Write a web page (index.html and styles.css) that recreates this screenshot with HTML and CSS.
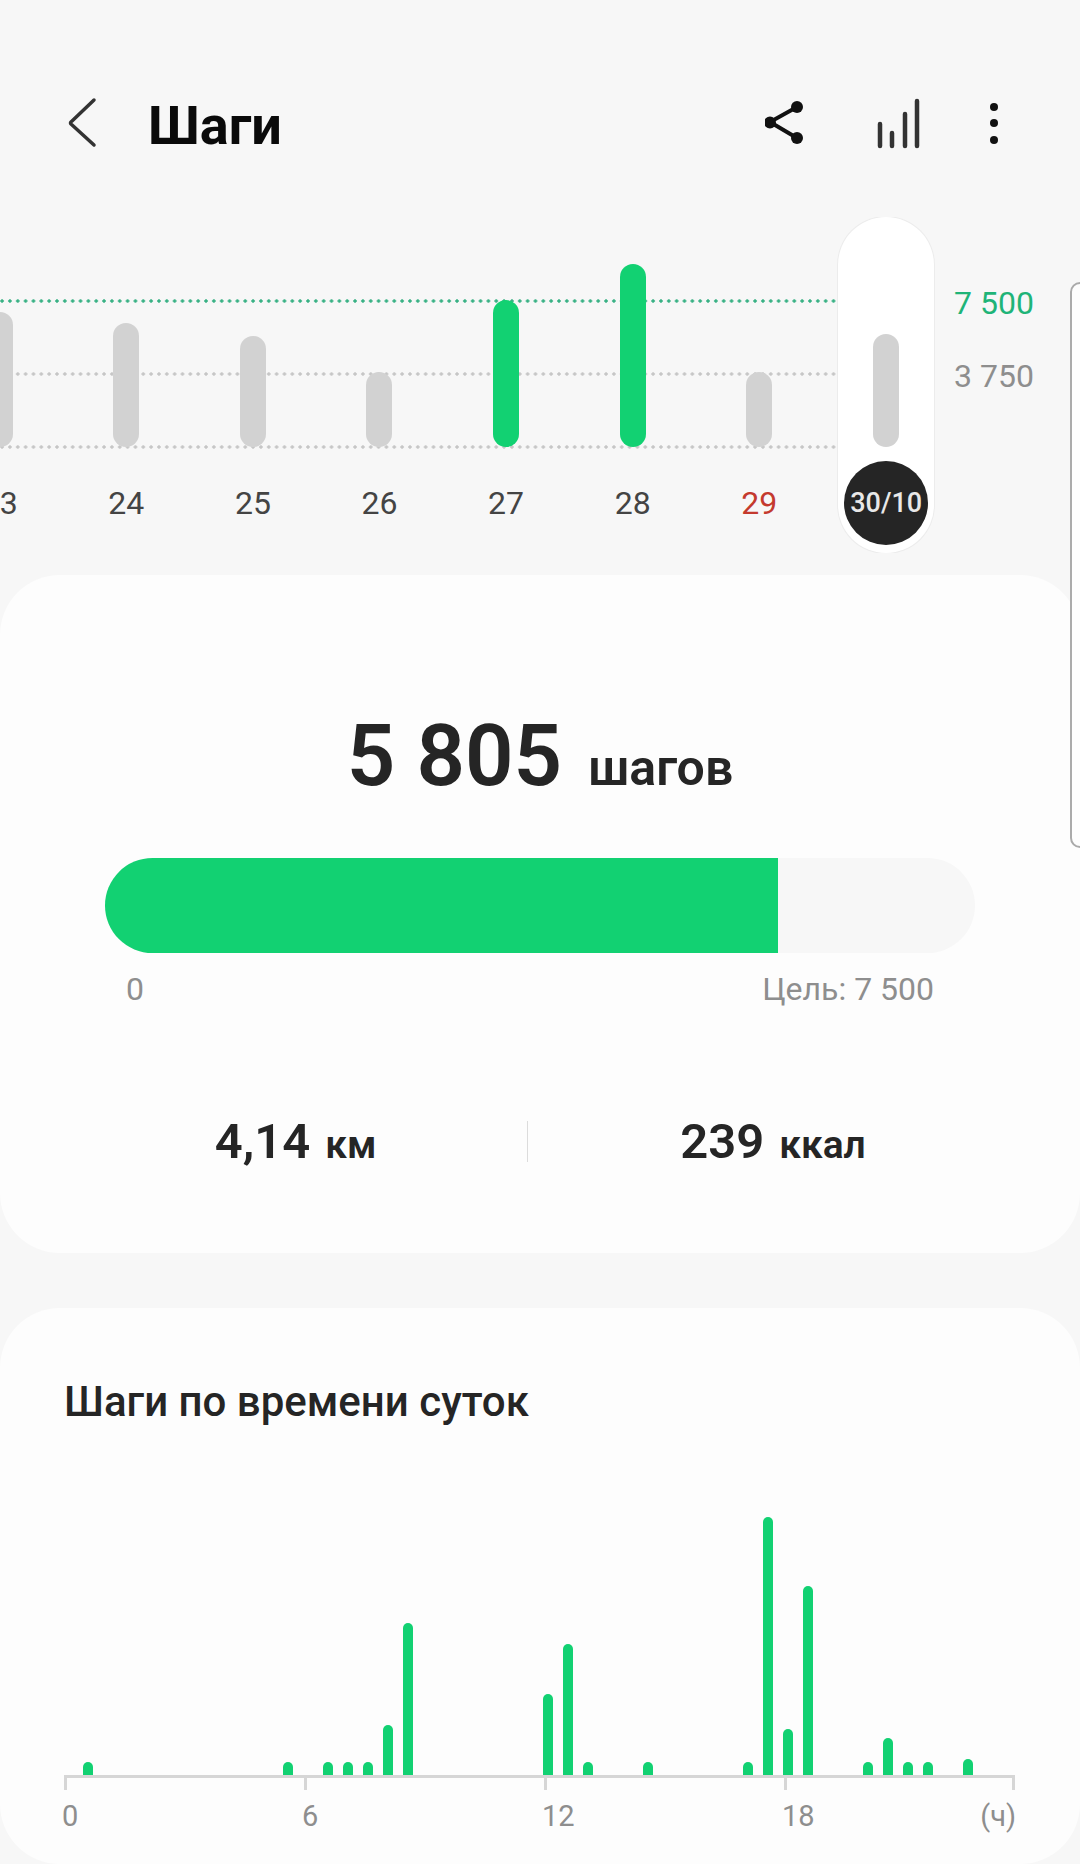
FILE: index.html
```html
<!DOCTYPE html>
<html lang="ru">
<head>
    <meta charset="UTF-8">
    <meta name="viewport" content="width=device-width, initial-scale=1.0">
    <title>Шаги</title>
    <link rel="stylesheet" href="styles.css">
</head>
<body>
    <header class="topbar">
        <svg class="back" width="40" height="60" viewBox="0 0 40 60">
            <path d="M34 7 L11 29 Q10 30 11 31 L34 52" />
        </svg>
        <h1>Шаги</h1>
        <svg class="icon-share" width="46" height="60" viewBox="0 0 46 60">
            <path d="M32 14 L5 29 L32 45" />
            <circle cx="32" cy="14" r="6" />
            <circle cx="5" cy="29.500" r="6" />
            <circle cx="32" cy="45" r="6" />
        </svg>
        <svg class="icon-signal" width="50" height="60" viewBox="0 0 50 60">
            <path d="M5 31 V53 M17 40 V53 M30 21 V53 M42 8 V53" />
        </svg>
        <svg class="icon-more" width="16" height="60" viewBox="0 0 16 60">
            <circle cx="8" cy="14" r="4" />
            <circle cx="8" cy="30" r="4" />
            <circle cx="8" cy="47" r="4" />
        </svg>
    </header>

    <section class="week">
        <div class="week-strip">
            <div class="grid-lines"></div>
            <div class="day first"><div class="plot"><div class="bar" style="height:135px"></div></div><div class="day-label">23</div></div>
            <div class="day"><div class="plot"><div class="bar" style="height:124px"></div></div><div class="day-label">24</div></div>
            <div class="day"><div class="plot"><div class="bar" style="height:111px"></div></div><div class="day-label">25</div></div>
            <div class="day"><div class="plot"><div class="bar" style="height:75px"></div></div><div class="day-label">26</div></div>
            <div class="day"><div class="plot"><div class="bar green" style="height:147px"></div></div><div class="day-label">27</div></div>
            <div class="day"><div class="plot"><div class="bar green" style="height:183px"></div></div><div class="day-label">28</div></div>
            <div class="day"><div class="plot"><div class="bar" style="height:75px"></div></div><div class="day-label red">29</div></div>
            <div class="day selected"><div class="plot"><div class="bar" style="height:113px"></div></div><div class="day-label">30/10</div></div>
        </div>
        <div class="scale">
            <span class="goal">7 500</span>
            <span>3 750</span>
        </div>
    </section>

    <div class="peek"></div>

    <section class="card summary">
        <div class="count"><span class="count-num">5 805</span><span class="count-unit">шагов</span></div>
        <div class="progress"><div class="progress-fill" style="width:77.4%"></div></div>
        <div class="progress-labels"><span>0</span><span>Цель: 7 500</span></div>
        <div class="stats">
            <div class="stat"><b>4,14</b><span>км</span></div>
            <div class="stat stat-right"><b>239</b><span>ккал</span></div>
        </div>
    </section>

    <section class="card hours">
        <h2>Шаги по времени суток</h2>
        <div class="hour-bars">
            <i style="grid-column:2;height:13px"></i>
            <i style="grid-column:12;height:13px"></i>
            <i style="grid-column:14;height:13px"></i>
            <i style="grid-column:15;height:13px"></i>
            <i style="grid-column:16;height:13px"></i>
            <i style="grid-column:17;height:50px"></i>
            <i style="grid-column:18;height:152px"></i>
            <i style="grid-column:25;height:81px"></i>
            <i style="grid-column:26;height:131px"></i>
            <i style="grid-column:27;height:13px"></i>
            <i style="grid-column:30;height:13px"></i>
            <i style="grid-column:35;height:13px"></i>
            <i style="grid-column:36;height:258px"></i>
            <i style="grid-column:37;height:46px"></i>
            <i style="grid-column:38;height:189px"></i>
            <i style="grid-column:41;height:13px"></i>
            <i style="grid-column:42;height:37px"></i>
            <i style="grid-column:43;height:13px"></i>
            <i style="grid-column:44;height:13px"></i>
            <i style="grid-column:46;height:16px"></i>
        </div>
        <div class="axis">
            <div class="tick"><span>0</span></div>
            <div class="tick"><span>6</span></div>
            <div class="tick"><span>12</span></div>
            <div class="tick"><span>18</span></div>
            <div class="tick tick-end"><span>(ч)</span></div>
        </div>
    </section>
</body>
</html>
```

FILE: styles.css
```css
body {
    margin: 0;
    width: 1080px;
    height: 1864px;
    overflow: hidden;
    position: relative;
    background: #f7f7f7;
    font-family: 'Roboto', 'Liberation Sans', sans-serif;
    color: #252525;
}

/* top bar */
.topbar {
    display: flex;
    align-items: center;
    height: 60px;
    padding: 93px 0 64px 60px;
}
.topbar h1 {
    flex: 1;
    margin: 0 0 0 48px;
    font-size: 54px;
    line-height: 60px;
    font-weight: 700;
    color: #0a0a0a;
    position: relative;
    top: 3px;
}
.back path {
    fill: none;
    stroke: #333;
    stroke-width: 3.5;
    stroke-linecap: round;
    stroke-linejoin: round;
}
.icon-share {
    margin-right: 64px;
}
.icon-share path {
    fill: none;
    stroke: #111;
    stroke-width: 4;
}
.icon-share circle,
.icon-more circle {
    fill: #111;
}
.icon-signal {
    margin-right: 61px;
}
.icon-signal path {
    fill: none;
    stroke: #333;
    stroke-width: 4.5;
    stroke-linecap: round;
}
.icon-more {
    margin-right: 78px;
}

/* week chart */
.week {
    display: flex;
    height: 336px;
}
.week-strip {
    width: 949px;
    flex: none;
    display: flex;
    overflow: hidden;
    position: relative;
}
.grid-lines {
    position: absolute;
    left: 0;
    top: 0;
    width: 838px;
    height: 240px;
    background:
        radial-gradient(circle, #38b184 1.4px, transparent 2px) 6px 82px / 7.85px 4px repeat-x,
        radial-gradient(circle, #c6c6c6 1.4px, transparent 2px) 6px 155px / 7.85px 4px repeat-x,
        radial-gradient(circle, #c6c6c6 1.4px, transparent 2px) 6px 228px / 7.85px 4px repeat-x;
}
.day {
    flex: none;
    width: 126.600px;
    position: relative;
}
.day.first {
    margin-left: -63.600px;
}
.plot {
    height: 230px;
    display: flex;
    align-items: flex-end;
    justify-content: center;
}
.bar {
    width: 26px;
    border-radius: 13px;
    background: #d2d2d2;
}
.bar.green {
    background: #12d172;
}
.day-label {
    margin-top: 14px;
    height: 84px;
    line-height: 84px;
    text-align: center;
    font-size: 32px;
    color: #444;
}
.day-label.red {
    color: #c43a2e;
}
.day.selected {
    width: 96px;
    height: 336px;
    margin-left: 15.600px;
    background: #fff;
    border-radius: 48px;
    box-shadow: 0 0 0 1px #ececec;
}
.day.selected .day-label {
    width: 84px;
    margin: 14px auto 0;
    border-radius: 50%;
    background: #252525;
    color: #e8e8e8;
    font-size: 27px;
    font-weight: 500;
}
.scale {
    display: flex;
    flex-direction: column;
    gap: 37px;
    padding: 68px 0 0 5px;
    font-size: 32px;
    line-height: 36px;
    color: #8e8e8e;
}
.scale .goal {
    color: #1fb478;
}

/* next page peeking in from the right */
.peek {
    position: absolute;
    left: 1070px;
    top: 282px;
    width: 20px;
    height: 566px;
    box-sizing: border-box;
    border: 2px solid #aaa;
    border-radius: 16px;
    background: #fdfdfd;
    z-index: 2;
}

/* cards */
.card {
    background: #fdfdfd;
    border-radius: 60px;
}
.summary {
    height: 678px;
    margin-top: 22px;
    box-sizing: border-box;
    padding-top: 131px;
}
.count {
    display: flex;
    justify-content: center;
    align-items: baseline;
    gap: 26px;
    height: 100px;
    line-height: 100px;
}
.count-num {
    font-size: 85px;
    font-weight: 600;
}
.count-unit {
    font-size: 50px;
    font-weight: 600;
}
.progress {
    height: 95px;
    margin: 52px 105px 0;
    border-radius: 48px;
    background: #f7f7f7;
    overflow: hidden;
}
.progress-fill {
    height: 100%;
    background: #12d172;
}
.progress-labels {
    display: flex;
    justify-content: space-between;
    margin: 18px 146px 0 126px;
    font-size: 32px;
    line-height: 36px;
    color: #8e8e8e;
}
.stats {
    display: grid;
    grid-template-columns: 463px 491px;
    margin: 114px 0 0 64px;
}
.stat {
    display: flex;
    justify-content: center;
    align-items: baseline;
    gap: 15px;
    height: 41px;
    line-height: 41px;
}
.stat b {
    font-size: 49px;
    font-weight: 600;
}
.stat span {
    font-size: 39px;
    font-weight: 600;
}
.stat-right {
    border-left: 1px solid #dcdcdc;
}

.hours {
    height: 556px;
    margin-top: 55px;
    box-sizing: border-box;
    padding-top: 72px;
}
.hours h2 {
    margin: 0 0 0 64px;
    font-size: 42px;
    line-height: 44px;
    font-weight: 500;
}
.hour-bars {
    display: grid;
    grid-template-columns: repeat(48, 20px);
    align-items: end;
    justify-items: center;
    height: 265px;
    margin: 86px 0 0 58px;
}
.hour-bars i {
    grid-row: 1;
    width: 10px;
    border-radius: 5px 5px 0 0;
    background: #12d172;
}
.axis {
    display: grid;
    grid-template-columns: 240px 240px 240px 228px 3px;
    width: 951px;
    margin-left: 64px;
    border-top: 3px solid #d6d6d6;
}
.tick::before {
    content: "";
    display: block;
    width: 3px;
    height: 12px;
    background: #d6d6d6;
}
.tick span {
    display: block;
    margin: 9px 0 0 -2px;
    font-size: 29px;
    line-height: 34px;
    color: #8e8e8e;
}
.tick-end {
    display: flex;
    flex-direction: column;
    align-items: flex-end;
}
.tick-end span {
    white-space: nowrap;
    margin-right: -1px;
}
```
